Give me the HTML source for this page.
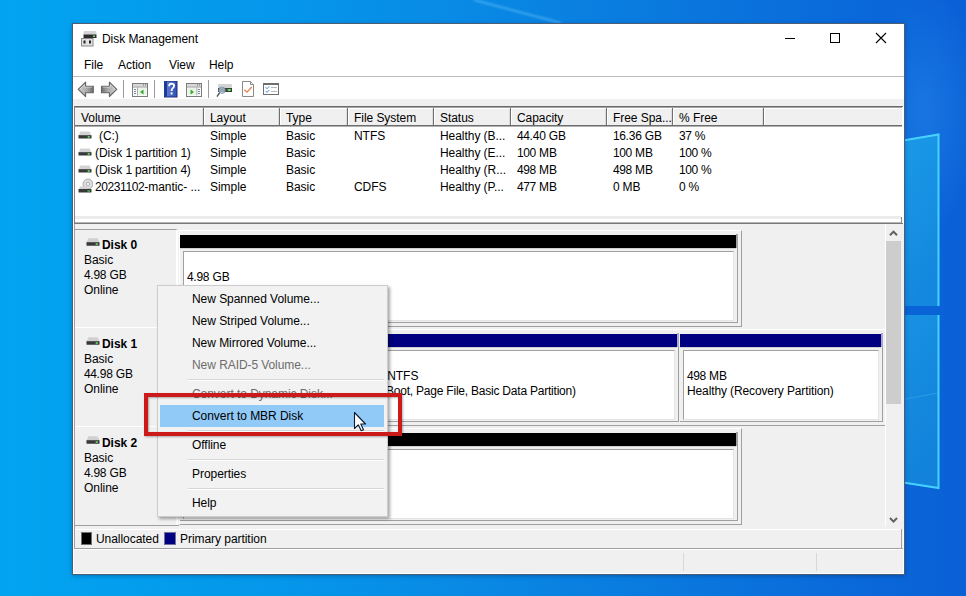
<!DOCTYPE html><html><head><meta charset="utf-8"><style>
*{margin:0;padding:0;box-sizing:border-box}
html,body{width:966px;height:596px;overflow:hidden}
body{position:relative;font-family:"Liberation Sans",sans-serif;font-size:12px;color:#000;
background:linear-gradient(90deg,#02a4f0 0%,#0596ea 30%,#0988e4 50%,#0a78de 70%,#0a6ada 87%,#0a60d6 100%)}
.a{position:absolute}
.t{position:absolute;white-space:pre;line-height:15px;font-size:12px;letter-spacing:-0.05px}
.g{color:#6d6d6d}
.b{font-weight:bold}
.n{letter-spacing:-0.4px}
</style></head><body><svg class="a" style="left:0;top:0" width="966" height="596"><defs><linearGradient id="pg" x1="0" y1="0" x2="0.3" y2="1"><stop offset="0" stop-color="#1a9ae8"/><stop offset="1" stop-color="#1488de"/></linearGradient><linearGradient id="pg2" x1="0" y1="0" x2="0.3" y2="1"><stop offset="0" stop-color="#1892e4"/><stop offset="1" stop-color="#1282da"/></linearGradient></defs><radialGradient id="glow" cx="0.5" cy="0.5" r="0.5"><stop offset="0" stop-color="#2a8cec" stop-opacity="0.45"/><stop offset="1" stop-color="#2a8cec" stop-opacity="0"/></radialGradient><ellipse cx="925" cy="110" rx="60" ry="120" fill="url(#glow)"/><polygon points="900,141 938,134 938,306 900,306" fill="url(#pg)"/><polygon points="900,315 938,315 938,488 900,482" fill="url(#pg2)"/><polyline points="900,141 938.5,134.5 938.5,306" fill="none" stroke="#46d2ff" stroke-width="2"/><polyline points="938.5,315 938.5,488 900,482" fill="none" stroke="#46d2ff" stroke-width="2"/><line x1="900" y1="400" x2="938" y2="393" stroke="#3ab0f0" stroke-width="1" opacity="0.5"/><filter id="bl"><feGaussianBlur stdDeviation="0.8"/></filter><line x1="474" y1="0" x2="561" y2="23" stroke="#6cc8fa" stroke-width="2" opacity="0.55" filter="url(#bl)"/></svg>
<div class="a" style="left:72px;top:23px;width:833px;height:552px;border:1px solid rgba(0,25,60,0.7);background:#fff;box-shadow:0 1px 4px rgba(0,20,60,0.3)"></div>
<div class="t " style="left:102px;top:32px;">Disk Management</div>
<div class="a" style="left:785px;top:38px;width:10px;height:1px;background:#000"></div>
<div class="a" style="left:830px;top:33px;width:10px;height:10px;border:1px solid #000"></div>
<svg class="a" style="left:875px;top:32px" width="12" height="12"><path d="M1 1 L11 11 M11 1 L1 11" stroke="#000" stroke-width="1.1"/></svg>
<div class="t " style="left:84px;top:58px;">File</div>
<div class="t " style="left:118px;top:58px;">Action</div>
<div class="t " style="left:169px;top:58px;">View</div>
<div class="t " style="left:209px;top:58px;">Help</div>
<div class="a" style="left:73px;top:76px;width:831px;height:1px;background:#bcbcbc"></div>
<div class="a" style="left:73px;top:99px;width:831px;height:7px;background:#f0f0f0"></div>
<svg class="a" style="left:80px;top:30px" width="18" height="17"><rect x="3.5" y="1" width="13" height="4" rx="1" fill="#d4d4d4"/><rect x="3.5" y="4.5" width="13" height="3.5" fill="#2e2e2e"/><rect x="13" y="5.5" width="2" height="1.5" fill="#6fe06f"/><rect x="1.5" y="8.5" width="11.5" height="7.5" fill="#e2e2e2" stroke="#8a8a8a" stroke-width="1"/><rect x="3.5" y="10.5" width="2" height="3" fill="#222"/><rect x="9" y="10.5" width="2" height="3" fill="#222"/></svg>
<svg class="a" style="left:77px;top:81px" width="42" height="17"><defs><linearGradient id="ag" x1="0" y1="0" x2="1" y2="0"><stop offset="0" stop-color="#d0d0d0"/><stop offset="0.6" stop-color="#a8a8a8"/><stop offset="1" stop-color="#6a6a6a"/></linearGradient><linearGradient id="ag2" x1="0" y1="0" x2="1" y2="0"><stop offset="0" stop-color="#6e6e6e"/><stop offset="0.4" stop-color="#a8a8a8"/><stop offset="1" stop-color="#d0d0d0"/></linearGradient></defs><path d="M1.2 8.3 L8.6 1.2 L8.6 5.2 L16.3 5.2 L16.3 11.7 L8.6 11.7 L8.6 15.5 Z" fill="url(#ag)" stroke="#646464" stroke-width="1.1" stroke-linejoin="round"/><path d="M2.8 8.3 L7.6 3.6 L7.6 6.2 L15.2 6.2" fill="none" stroke="#e8e8e8" stroke-width="0.7" opacity="0.8"/><path d="M39.8 8.3 L32.4 1.2 L32.4 5.2 L24.5 5.2 L24.5 11.7 L32.4 11.7 L32.4 15.5 Z" fill="url(#ag2)" stroke="#646464" stroke-width="1.1" stroke-linejoin="round"/><path d="M25.6 6.2 L33.4 6.2 L33.4 3.6 L38.2 8.3" fill="none" stroke="#e8e8e8" stroke-width="0.7" opacity="0.8"/></svg>
<div class="a" style="left:123px;top:80px;width:1px;height:18px;background:#9a9a9a"></div>
<div class="a" style="left:154px;top:80px;width:1px;height:18px;background:#9a9a9a"></div>
<div class="a" style="left:208px;top:80px;width:1px;height:18px;background:#9a9a9a"></div>
<svg class="a" style="left:132px;top:83px" width="17" height="15"><rect x="0.5" y="0.5" width="15" height="13" fill="#fafafa" stroke="#7c7c7c" stroke-width="1"/><rect x="1" y="1" width="14" height="2.5" fill="#d8d8d8"/><rect x="11" y="1.5" width="1" height="1" fill="#666"/><rect x="13" y="1.5" width="1" height="1" fill="#666"/><rect x="1" y="3.5" width="14" height="1" fill="#9a9a9a"/><rect x="5.5" y="5" width="9" height="7" fill="#eaf6e4"/><path d="M11.5 6.5 L8 9 L11.5 11.5 Z" fill="#3aa63a"/><rect x="2" y="6" width="2" height="1" fill="#7a8a9a"/><rect x="2" y="8" width="2" height="1" fill="#7a8a9a"/><rect x="2" y="10" width="2" height="1" fill="#7a8a9a"/><rect x="5" y="4.5" width="0.8" height="8" fill="#9a9a9a"/></svg>
<svg class="a" style="left:186px;top:83px" width="17" height="15"><rect x="0.5" y="0.5" width="15" height="13" fill="#fafafa" stroke="#7c7c7c" stroke-width="1"/><rect x="1" y="1" width="14" height="2.5" fill="#d8d8d8"/><rect x="11" y="1.5" width="1" height="1" fill="#666"/><rect x="13" y="1.5" width="1" height="1" fill="#666"/><rect x="1" y="3.5" width="14" height="1" fill="#9a9a9a"/><rect x="1.5" y="5" width="9" height="7" fill="#eaf6e4"/><path d="M4.5 6.5 L8 9 L4.5 11.5 Z" fill="#3aa63a"/><rect x="12" y="6" width="2" height="1" fill="#7a8a9a"/><rect x="12" y="8" width="2" height="1" fill="#7a8a9a"/><rect x="12" y="10" width="2" height="1" fill="#7a8a9a"/><rect x="10.5" y="4.5" width="0.8" height="8" fill="#9a9a9a"/></svg>
<svg class="a" style="left:164px;top:81px" width="14" height="17"><defs><linearGradient id="hg" x1="0" y1="0" x2="1" y2="0"><stop offset="0" stop-color="#2848a8"/><stop offset="0.25" stop-color="#5a78d0"/><stop offset="1" stop-color="#3050b0"/></linearGradient></defs><rect x="0" y="0" width="13" height="16" fill="url(#hg)"/><rect x="0" y="0" width="13" height="16" fill="none" stroke="#1a2e80" stroke-width="1"/><rect x="0.5" y="0.5" width="2.5" height="15" fill="#1e3a98"/><path d="M5 5.2 Q5.2 2.6 7.6 2.6 Q10.2 2.7 10.1 5 Q10 6.6 8.4 7.6 Q7.6 8.2 7.6 10" fill="none" stroke="#fff" stroke-width="1.8"/><rect x="6.6" y="11.4" width="2" height="2" fill="#fff"/></svg>
<svg class="a" style="left:216px;top:83px" width="17" height="15"><rect x="2" y="1" width="14" height="4" rx="1" fill="#d4d4d4"/><rect x="2" y="5" width="14" height="4" fill="#3a3a3a"/><rect x="11.5" y="6" width="3.5" height="2" fill="#40c040"/><rect x="12.5" y="6.5" width="1.5" height="1" fill="#b0ffb0"/><circle cx="6" cy="7.2" r="3.2" fill="rgba(190,215,235,0.7)" stroke="#7890a8" stroke-width="0.9"/><path d="M3.6 9.6 L1 13.6" stroke="#505860" stroke-width="1.4"/></svg>
<svg class="a" style="left:241px;top:80px" width="15" height="18"><path d="M1.5 1.5 L9.5 1.5 L12.5 4.5 L12.5 16.5 L1.5 16.5 Z" fill="#fff" stroke="#8a8a8a" stroke-width="1"/><path d="M9.5 1.5 L9.5 4.5 L12.5 4.5" fill="#e8e8e8" stroke="#8a8a8a" stroke-width="1"/><path d="M3.4 9.8 L6 12.2 L10.8 7" fill="none" stroke="#e2804c" stroke-width="1.3"/></svg>
<svg class="a" style="left:262px;top:82px" width="18" height="14"><rect x="1.5" y="1.5" width="15" height="11" fill="#fff" stroke="#6e6e6e" stroke-width="1"/><rect x="1" y="1" width="16" height="2" fill="#6e6e6e"/><path d="M3.5 5.2 L5 6.8 L7.2 4.4" fill="none" stroke="#4a8ed6" stroke-width="1"/><path d="M3.5 8.8 L5 10.4 L7.2 8" fill="none" stroke="#4a8ed6" stroke-width="1"/><rect x="9" y="5" width="6" height="1" fill="#b8b8b8"/><rect x="9" y="9" width="6" height="1" fill="#b8b8b8"/></svg>
<div class="a" style="left:74px;top:106px;width:829px;height:118px;border-left:1px solid #828282;border-top:1px solid #6a6a6a;border-bottom:1px solid #7a7a7a;background:#fff"></div>
<div class="a" style="left:75px;top:107px;width:827px;height:20px;background:#f0f0f0;border-top:1px solid #a4a4a4;border-bottom:1px solid #b0b0b0"></div>
<div class="a" style="left:75px;top:108px;width:827px;height:1px;background:#fff"></div>
<div class="a" style="left:75px;top:125px;width:827px;height:1px;background:#6e6e6e"></div>
<div class="a" style="left:202px;top:109px;width:1px;height:16px;background:#dcdcdc"></div>
<div class="a" style="left:203px;top:108px;width:1px;height:17px;background:#6e6e6e"></div>
<div class="a" style="left:204px;top:108px;width:1px;height:17px;background:#fff"></div>
<div class="a" style="left:278px;top:109px;width:1px;height:16px;background:#dcdcdc"></div>
<div class="a" style="left:279px;top:108px;width:1px;height:17px;background:#6e6e6e"></div>
<div class="a" style="left:280px;top:108px;width:1px;height:17px;background:#fff"></div>
<div class="a" style="left:346px;top:109px;width:1px;height:16px;background:#dcdcdc"></div>
<div class="a" style="left:347px;top:108px;width:1px;height:17px;background:#6e6e6e"></div>
<div class="a" style="left:348px;top:108px;width:1px;height:17px;background:#fff"></div>
<div class="a" style="left:432px;top:109px;width:1px;height:16px;background:#dcdcdc"></div>
<div class="a" style="left:433px;top:108px;width:1px;height:17px;background:#6e6e6e"></div>
<div class="a" style="left:434px;top:108px;width:1px;height:17px;background:#fff"></div>
<div class="a" style="left:509px;top:109px;width:1px;height:16px;background:#dcdcdc"></div>
<div class="a" style="left:510px;top:108px;width:1px;height:17px;background:#6e6e6e"></div>
<div class="a" style="left:511px;top:108px;width:1px;height:17px;background:#fff"></div>
<div class="a" style="left:605px;top:109px;width:1px;height:16px;background:#dcdcdc"></div>
<div class="a" style="left:606px;top:108px;width:1px;height:17px;background:#6e6e6e"></div>
<div class="a" style="left:607px;top:108px;width:1px;height:17px;background:#fff"></div>
<div class="a" style="left:671px;top:109px;width:1px;height:16px;background:#dcdcdc"></div>
<div class="a" style="left:672px;top:108px;width:1px;height:17px;background:#6e6e6e"></div>
<div class="a" style="left:673px;top:108px;width:1px;height:17px;background:#fff"></div>
<div class="a" style="left:762px;top:109px;width:1px;height:16px;background:#dcdcdc"></div>
<div class="a" style="left:763px;top:108px;width:1px;height:17px;background:#6e6e6e"></div>
<div class="a" style="left:764px;top:108px;width:1px;height:17px;background:#fff"></div>
<div class="t " style="left:81px;top:111px;">Volume</div>
<div class="t " style="left:210px;top:111px;">Layout</div>
<div class="t " style="left:286px;top:111px;">Type</div>
<div class="t " style="left:354px;top:111px;">File System</div>
<div class="t " style="left:440px;top:111px;">Status</div>
<div class="t " style="left:517px;top:111px;">Capacity</div>
<div class="t " style="left:613px;top:111px;">Free Spa...</div>
<div class="t " style="left:679px;top:111px;">% Free</div>
<div class="t " style="left:99px;top:129px;">(C:)</div>
<div class="t " style="left:210px;top:129px;">Simple</div>
<div class="t " style="left:286px;top:129px;">Basic</div>
<div class="t " style="left:354px;top:129px;">NTFS</div>
<div class="t " style="left:440px;top:129px;">Healthy (B...</div>
<div class="t " style="left:517px;top:129px;"><span class="n">44</span>.<span class="n">40</span> GB</div>
<div class="t " style="left:613px;top:129px;"><span class="n">16</span>.<span class="n">36</span> GB</div>
<div class="t " style="left:679px;top:129px;"><span class="n">37</span> %</div>
<svg class="a" style="left:78px;top:131px" width="14" height="9"><path d="M1 4 L2 1.3 Q2.3 0.6 3 0.6 L11 0.6 Q11.7 0.6 12 1.3 L13 4 Z" fill="#d2d2d2"/><rect x="0.5" y="4" width="13" height="3.6" rx="0.6" fill="#383838"/><rect x="1" y="4.2" width="12" height="0.8" fill="#5e5e5e"/><rect x="9.5" y="5.2" width="2.5" height="1.5" fill="#3cc03c"/><rect x="10.3" y="5.5" width="1" height="0.9" fill="#b8ffb8"/></svg>
<div class="t " style="left:95px;top:146px;">(Disk <span class="n">1</span> partition <span class="n">1</span>)</div>
<div class="t " style="left:210px;top:146px;">Simple</div>
<div class="t " style="left:286px;top:146px;">Basic</div>
<div class="t " style="left:440px;top:146px;">Healthy (E...</div>
<div class="t " style="left:517px;top:146px;"><span class="n">100</span> MB</div>
<div class="t " style="left:613px;top:146px;"><span class="n">100</span> MB</div>
<div class="t " style="left:679px;top:146px;"><span class="n">100</span> %</div>
<svg class="a" style="left:78px;top:148px" width="14" height="9"><path d="M1 4 L2 1.3 Q2.3 0.6 3 0.6 L11 0.6 Q11.7 0.6 12 1.3 L13 4 Z" fill="#d2d2d2"/><rect x="0.5" y="4" width="13" height="3.6" rx="0.6" fill="#383838"/><rect x="1" y="4.2" width="12" height="0.8" fill="#5e5e5e"/><rect x="9.5" y="5.2" width="2.5" height="1.5" fill="#3cc03c"/><rect x="10.3" y="5.5" width="1" height="0.9" fill="#b8ffb8"/></svg>
<div class="t " style="left:95px;top:163px;">(Disk <span class="n">1</span> partition <span class="n">4</span>)</div>
<div class="t " style="left:210px;top:163px;">Simple</div>
<div class="t " style="left:286px;top:163px;">Basic</div>
<div class="t " style="left:440px;top:163px;">Healthy (R...</div>
<div class="t " style="left:517px;top:163px;"><span class="n">498</span> MB</div>
<div class="t " style="left:613px;top:163px;"><span class="n">498</span> MB</div>
<div class="t " style="left:679px;top:163px;"><span class="n">100</span> %</div>
<svg class="a" style="left:78px;top:165px" width="14" height="9"><path d="M1 4 L2 1.3 Q2.3 0.6 3 0.6 L11 0.6 Q11.7 0.6 12 1.3 L13 4 Z" fill="#d2d2d2"/><rect x="0.5" y="4" width="13" height="3.6" rx="0.6" fill="#383838"/><rect x="1" y="4.2" width="12" height="0.8" fill="#5e5e5e"/><rect x="9.5" y="5.2" width="2.5" height="1.5" fill="#3cc03c"/><rect x="10.3" y="5.5" width="1" height="0.9" fill="#b8ffb8"/></svg>
<div class="t " style="left:95px;top:180px;"><span class="n">20231102</span>-mantic- ...</div>
<div class="t " style="left:210px;top:180px;">Simple</div>
<div class="t " style="left:286px;top:180px;">Basic</div>
<div class="t " style="left:354px;top:180px;">CDFS</div>
<div class="t " style="left:440px;top:180px;">Healthy (P...</div>
<div class="t " style="left:517px;top:180px;"><span class="n">477</span> MB</div>
<div class="t " style="left:613px;top:180px;"><span class="n">0</span> MB</div>
<div class="t " style="left:679px;top:180px;"><span class="n">0</span> %</div>
<svg class="a" style="left:78px;top:178px" width="15" height="16"><circle cx="10" cy="6" r="5" fill="#dcdcdc" stroke="#a0a0a0" stroke-width="0.8"/><circle cx="10" cy="6" r="1.6" fill="#fff" stroke="#8a8a8a" stroke-width="0.6"/><path d="M1 11 L2 8.6 L9 8.6 L10 11 Z" fill="#d2d2d2"/><rect x="0.5" y="11" width="13" height="3.6" rx="0.6" fill="#383838"/><rect x="9.5" y="12.2" width="2.5" height="1.5" fill="#3cc03c"/></svg>
<div class="a" style="left:75px;top:216px;width:826px;height:3px;background:#ececec"></div>
<div class="a" style="left:901px;top:217px;width:1px;height:6px;background:#8a8a8a"></div>
<div class="a" style="left:75px;top:222px;width:826px;height:1px;background:#b4b4b4"></div>
<div class="a" style="left:74px;top:223px;width:828px;height:1px;background:#7a7a7a"></div>
<div class="a" style="left:73px;top:224px;width:831px;height:305px;background:#f0f0f0;border-left:1px solid #fff"></div>
<div class="a" style="left:74px;top:224px;width:1px;height:325px;background:#a0a0a0"></div>
<div class="a" style="left:885px;top:224px;width:1px;height:305px;background:#fff"></div>
<div class="a" style="left:886px;top:241px;width:15px;height:163px;background:#cdcdcd"></div>
<svg class="a" style="left:888px;top:229px" width="11" height="8"><path d="M2 6.2 L5.5 2.6 L9 6.2" stroke="#606060" stroke-width="2" fill="none"/></svg>
<svg class="a" style="left:888px;top:516px" width="11" height="8"><path d="M2 2 L5.5 5.6 L9 2" stroke="#606060" stroke-width="2" fill="none"/></svg>
<div class="a" style="left:75px;top:229px;width:103px;height:98px;border-top:1px solid #a0a0a0;border-right:2px solid #fff;background:#f0f0f0"></div>
<svg class="a" style="left:86px;top:238px" width="14" height="9"><path d="M0.8 4 L2 1 Q2.3 0.3 3 0.3 L11 0.3 Q11.7 0.3 12 1 L13.2 4 Z" fill="#d0d0d0"/><rect x="0.5" y="4" width="13" height="3.8" rx="0.6" fill="#383838"/><rect x="1" y="4.2" width="12" height="0.8" fill="#5e5e5e"/><rect x="9.5" y="5.3" width="2.5" height="1.5" fill="#3cc03c"/><rect x="10.3" y="5.6" width="1" height="0.9" fill="#b8ffb8"/></svg>
<div class="t b" style="left:102px;top:238px;">Disk <span class="n">0</span></div>
<div class="t " style="left:84px;top:253px;">Basic</div>
<div class="t " style="left:84px;top:268px;"><span class="n">4</span>.<span class="n">98</span> GB</div>
<div class="t " style="left:84px;top:283px;">Online</div>
<div class="a" style="left:75px;top:327px;width:103px;height:1px;background:#fff"></div>
<div class="a" style="left:75px;top:328px;width:103px;height:98px;border-right:2px solid #fff;background:#f0f0f0"></div>
<svg class="a" style="left:86px;top:337px" width="14" height="9"><path d="M0.8 4 L2 1 Q2.3 0.3 3 0.3 L11 0.3 Q11.7 0.3 12 1 L13.2 4 Z" fill="#d0d0d0"/><rect x="0.5" y="4" width="13" height="3.8" rx="0.6" fill="#383838"/><rect x="1" y="4.2" width="12" height="0.8" fill="#5e5e5e"/><rect x="9.5" y="5.3" width="2.5" height="1.5" fill="#3cc03c"/><rect x="10.3" y="5.6" width="1" height="0.9" fill="#b8ffb8"/></svg>
<div class="t b" style="left:102px;top:337px;">Disk <span class="n">1</span></div>
<div class="t " style="left:84px;top:352px;">Basic</div>
<div class="t " style="left:84px;top:367px;"><span class="n">44</span>.<span class="n">98</span> GB</div>
<div class="t " style="left:84px;top:382px;">Online</div>
<div class="a" style="left:75px;top:426px;width:103px;height:1px;background:#fff"></div>
<div class="a" style="left:75px;top:427px;width:103px;height:98px;border-right:2px solid #fff;background:#f0f0f0"></div>
<svg class="a" style="left:86px;top:436px" width="14" height="9"><path d="M0.8 4 L2 1 Q2.3 0.3 3 0.3 L11 0.3 Q11.7 0.3 12 1 L13.2 4 Z" fill="#d0d0d0"/><rect x="0.5" y="4" width="13" height="3.8" rx="0.6" fill="#383838"/><rect x="1" y="4.2" width="12" height="0.8" fill="#5e5e5e"/><rect x="9.5" y="5.3" width="2.5" height="1.5" fill="#3cc03c"/><rect x="10.3" y="5.6" width="1" height="0.9" fill="#b8ffb8"/></svg>
<div class="t b" style="left:102px;top:436px;">Disk <span class="n">2</span></div>
<div class="t " style="left:84px;top:451px;">Basic</div>
<div class="t " style="left:84px;top:466px;"><span class="n">4</span>.<span class="n">98</span> GB</div>
<div class="t " style="left:84px;top:481px;">Online</div>
<div class="a" style="left:75px;top:525px;width:103px;height:1px;background:#fff"></div>
<div class="a" style="left:179px;top:230px;width:563px;height:97px;border-top:1px solid #fff;border-left:1px solid #fff;border-right:1px solid #a0a0a0;border-bottom:1px solid #a0a0a0"></div>
<div class="a" style="left:180px;top:234px;width:558px;height:89px;border-right:1px solid #a0a0a0;border-bottom:1px solid #a0a0a0"></div>
<div class="a" style="left:180px;top:235px;width:556px;height:13px;background:#000"></div>
<div class="a" style="left:736px;top:234px;width:2px;height:14px;background:#a0a0a0"></div>
<div class="a" style="left:180px;top:248px;width:556px;height:1px;background:#d0d0d0"></div>
<div class="a" style="left:183px;top:251px;width:551px;height:70px;background:#fff;border-top:1px solid #a0a0a0;border-left:1px solid #a0a0a0;border-bottom:1px solid #e4e4e4;border-right:1px solid #e4e4e4"></div>
<div class="t " style="left:187px;top:270px;"><span class="n">4</span>.<span class="n">98</span> GB</div>
<div class="t " style="left:187px;top:285px;">Unallocated</div>
<div class="a" style="left:179px;top:329px;width:708px;height:97px;border-top:1px solid #fff;border-left:1px solid #fff;border-right:1px solid #a0a0a0;border-bottom:1px solid #a0a0a0"></div>
<div class="a" style="left:180px;top:333px;width:145px;height:89px;border-right:1px solid #a0a0a0;border-bottom:1px solid #a0a0a0"></div>
<div class="a" style="left:180px;top:334px;width:143px;height:13px;background:#000080"></div>
<div class="a" style="left:323px;top:333px;width:2px;height:14px;background:#a8a8d0"></div>
<div class="a" style="left:180px;top:347px;width:143px;height:1px;background:#d0d0d0"></div>
<div class="a" style="left:183px;top:350px;width:138px;height:70px;background:#fff;border-top:1px solid #a0a0a0;border-left:1px solid #a0a0a0;border-bottom:1px solid #e4e4e4;border-right:1px solid #e4e4e4"></div>
<div class="t " style="left:187px;top:369px;"><span class="n">100</span> MB</div>
<div class="t " style="left:187px;top:384px;">Healthy (EFI System Partition)</div>
<div class="a" style="left:326px;top:333px;width:353px;height:89px;border-right:1px solid #a0a0a0;border-bottom:1px solid #a0a0a0"></div>
<div class="a" style="left:326px;top:334px;width:351px;height:13px;background:#000080"></div>
<div class="a" style="left:677px;top:333px;width:2px;height:14px;background:#a8a8d0"></div>
<div class="a" style="left:326px;top:347px;width:351px;height:1px;background:#d0d0d0"></div>
<div class="a" style="left:329px;top:350px;width:346px;height:70px;background:#fff;border-top:1px solid #a0a0a0;border-left:1px solid #a0a0a0;border-bottom:1px solid #e4e4e4;border-right:1px solid #e4e4e4"></div>
<div class="t " style="left:335px;top:354px;">(C:)</div>
<div class="t " style="left:335px;top:369px;"><span class="n">44</span>.<span class="n">40</span> GB NTFS</div>
<div class="t " style="left:340px;top:384px;letter-spacing:-0.22px">Healthy (Boot, Page File, Basic Data Partition)</div>
<div class="a" style="left:680px;top:333px;width:203px;height:89px;border-right:1px solid #a0a0a0;border-bottom:1px solid #a0a0a0"></div>
<div class="a" style="left:680px;top:334px;width:201px;height:13px;background:#000080"></div>
<div class="a" style="left:881px;top:333px;width:2px;height:14px;background:#a8a8d0"></div>
<div class="a" style="left:680px;top:347px;width:201px;height:1px;background:#d0d0d0"></div>
<div class="a" style="left:683px;top:350px;width:196px;height:70px;background:#fff;border-top:1px solid #a0a0a0;border-left:1px solid #a0a0a0;border-bottom:1px solid #e4e4e4;border-right:1px solid #e4e4e4"></div>
<div class="t " style="left:687px;top:369px;"><span class="n">498</span> MB</div>
<div class="t " style="left:687px;top:384px;letter-spacing:-0.12px">Healthy (Recovery Partition)</div>
<div class="a" style="left:179px;top:428px;width:563px;height:97px;border-top:1px solid #fff;border-left:1px solid #fff;border-right:1px solid #a0a0a0;border-bottom:1px solid #a0a0a0"></div>
<div class="a" style="left:180px;top:432px;width:558px;height:89px;border-right:1px solid #a0a0a0;border-bottom:1px solid #a0a0a0"></div>
<div class="a" style="left:180px;top:433px;width:556px;height:13px;background:#000"></div>
<div class="a" style="left:736px;top:432px;width:2px;height:14px;background:#a0a0a0"></div>
<div class="a" style="left:180px;top:446px;width:556px;height:1px;background:#d0d0d0"></div>
<div class="a" style="left:183px;top:449px;width:551px;height:70px;background:#fff;border-top:1px solid #a0a0a0;border-left:1px solid #a0a0a0;border-bottom:1px solid #e4e4e4;border-right:1px solid #e4e4e4"></div>
<div class="t " style="left:187px;top:468px;"><span class="n">4</span>.<span class="n">98</span> GB</div>
<div class="t " style="left:187px;top:483px;">Unallocated</div>
<div class="a" style="left:885px;top:224px;width:18px;height:305px;background:#f0f0f0"></div>
<div class="a" style="left:885px;top:224px;width:1px;height:305px;background:#fff"></div>
<div class="a" style="left:886px;top:241px;width:15px;height:163px;background:#cdcdcd"></div>
<svg class="a" style="left:888px;top:229px" width="11" height="8"><path d="M2 6.2 L5.5 2.6 L9 6.2" stroke="#606060" stroke-width="2" fill="none"/></svg>
<svg class="a" style="left:888px;top:516px" width="11" height="8"><path d="M2 2 L5.5 5.6 L9 2" stroke="#606060" stroke-width="2" fill="none"/></svg>
<div class="a" style="left:75px;top:525px;width:104px;height:1px;background:#a0a0a0"></div>
<div class="a" style="left:74px;top:526px;width:829px;height:23px;border-left:1px solid #a0a0a0;border-bottom:1px solid #a0a0a0;background:#f0f0f0"></div>
<div class="a" style="left:75px;top:529px;width:827px;height:1px;background:#fff"></div>
<div class="a" style="left:901px;top:529px;width:1px;height:20px;background:#a0a0a0"></div>
<div class="a" style="left:81px;top:532px;width:11px;height:13px;background:#000;border:1px solid #707070"></div>
<div class="t " style="left:96px;top:532px;">Unallocated</div>
<div class="a" style="left:164px;top:532px;width:12px;height:13px;background:#000080;border:1px solid #7070a0"></div>
<div class="t " style="left:180px;top:532px;">Primary partition</div>
<div class="a" style="left:73px;top:549px;width:831px;height:25px;background:#f0f0f0;border-top:1px solid #fff;border-left:1px solid #fff;border-bottom:1px solid #fff;border-right:1px solid #fff"></div>
<div class="a" style="left:683px;top:553px;width:1px;height:18px;background:#d8d8d8"></div>
<div class="a" style="left:816px;top:553px;width:1px;height:18px;background:#d8d8d8"></div>
<div class="a" style="left:157px;top:285px;width:231px;height:232px;background:#f2f2f2;border:1px solid #cccccc;box-shadow:2px 2px 3px rgba(0,0,0,0.35)"></div>
<div class="a" style="left:160px;top:405px;width:224px;height:22px;background:#91c9f7"></div>
<div class="t " style="left:192px;top:292px;">New Spanned Volume...</div>
<div class="t " style="left:192px;top:314px;">New Striped Volume...</div>
<div class="t " style="left:192px;top:336px;">New Mirrored Volume...</div>
<div class="t g" style="left:192px;top:358px;">New RAID-<span class="n">5</span> Volume...</div>
<div class="t g" style="left:192px;top:387px;">Convert to Dynamic Disk...</div>
<div class="t " style="left:192px;top:409px;">Convert to MBR Disk</div>
<div class="t " style="left:192px;top:438px;">Offline</div>
<div class="t " style="left:192px;top:467px;">Properties</div>
<div class="t " style="left:192px;top:496px;">Help</div>
<div class="a" style="left:188px;top:379px;width:196px;height:1px;background:#d7d7d7"></div>
<div class="a" style="left:188px;top:380px;width:196px;height:1px;background:#fff"></div>
<div class="a" style="left:188px;top:430px;width:196px;height:1px;background:#d7d7d7"></div>
<div class="a" style="left:188px;top:431px;width:196px;height:1px;background:#fff"></div>
<div class="a" style="left:188px;top:459px;width:196px;height:1px;background:#d7d7d7"></div>
<div class="a" style="left:188px;top:460px;width:196px;height:1px;background:#fff"></div>
<div class="a" style="left:188px;top:488px;width:196px;height:1px;background:#d7d7d7"></div>
<div class="a" style="left:188px;top:489px;width:196px;height:1px;background:#fff"></div>
<div class="a" style="left:144px;top:393px;width:258px;height:43px;border:4px solid #cc1a1a;box-shadow:1px 1px 2px rgba(0,0,0,0.3), inset 1px 1px 2px rgba(0,0,0,0.3)"></div>
<svg class="a" style="left:353px;top:411px" width="14" height="21"><path d="M1.5 1.5 L1.5 17.5 L5.3 13.8 L8.2 19.8 L10.5 18.8 L7.8 13 L12.5 13 Z" fill="#fff" stroke="#0c1a2e" stroke-width="1.1" stroke-linejoin="round"/></svg></body></html>
